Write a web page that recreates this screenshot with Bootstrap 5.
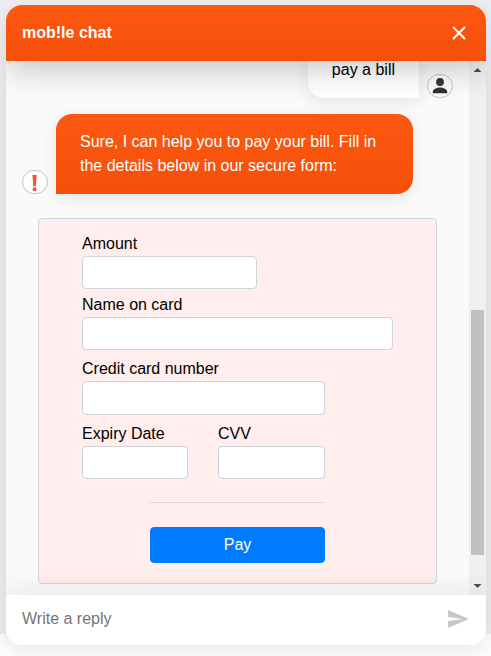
<!DOCTYPE html>
<html lang="en">
<head>
<meta charset="utf-8">
<meta name="viewport" content="width=device-width, initial-scale=1">
<title>mob!le chat</title>
<link href="https://cdn.jsdelivr.net/npm/bootstrap@5.3.0/dist/css/bootstrap.min.css" rel="stylesheet">
<style>
  body { font-family: "Liberation Sans", Arial, sans-serif; height: 656px; padding: 5px 5px 11px 6px; color: #000;
    background: linear-gradient(#eeeef0 0, #ececee 60px, #ececee 634px, #fefcfe 634px); }
  .chat-panel { width: 480px; height: 640px; border-radius: 16px; background: #fafafa; box-shadow: 0 4px 20px rgba(40, 10, 50, .1); }
  .orange { background: linear-gradient(#fc5810, #f4500a); color: #fff; }
  .chat-head { height: 56px; box-shadow: 0 8px 32px rgba(0, 0, 0, .22); z-index: 2; }
  .chat-foot { height: 50px; box-shadow: 0 -6px 24px rgba(30, 10, 50, .07); z-index: 2; padding-bottom: 2px; }
  .chat-foot input { color: #757575; outline: 0; }
  .chat-foot input::placeholder { color: #757575; }
  .messages { padding: 0 32px 11px 16px; }
  .bubble { padding: 16px 24px; line-height: 24px; box-shadow: 0 4px 16px rgba(30, 10, 50, .09); }
  .bubble-user { border-radius: 16px 16px 0 16px; background: #fff; }
  .bubble-bot { width: 357px; border-radius: 16px 16px 16px 0; }
  .avatar { width: 26px; height: 24px; border: 1px solid #c4c4c4; border-radius: 12px; background: #fff; }
  .avatar-user { margin-right: -16px; background: #fafafa; }
  .pay-form { margin-left: 16px; width: 399px; height: 366px; padding: 12px 43px 0; background: #ffeeed; border: 1px solid #ced4da; border-radius: 4px; }
  .pay-form label { line-height: 24px; padding-top: 1px; display: block; }
  .pay-form .form-control { height: 33px; min-height: 0; padding: 4px 8px; border-color: #ced4da; border-radius: 4px; }
  .w-amount { width: 175px; }
  .w-name { width: 311px; }
  .w-card { width: 243px; }
  .pay-form .h-card { height: 34px; }
  .name-row { margin-top: 3px; }
  .gap-row { margin-top: 6px; }
  .w-expiry { width: 106px; }
  .w-cvv { width: 107px; }
  .pay-zone { width: 175px; margin-left: 68px; }
  .divider { height: 1px; margin: 23px 0 24px; background: #e5d6d5; }
  .btn-pay { height: 36px; padding: 0; line-height: 34px; border-radius: 4px; background: #007bff; border-color: #007bff; color: #fff; }
  .scroll-track { width: 17px; background: #f0f0f0; }
  .track-top { height: 249px; }
  .thumb { width: 13px; height: 245px; background: #c1c1c1; }
</style>
</head>
<body>
<main class="chat-panel d-flex flex-column overflow-hidden">
  <header class="chat-head orange d-flex align-items-center justify-content-between px-3 position-relative flex-shrink-0">
    <span class="fw-bold">mob!le chat</span>
    <svg width="22" height="24" viewBox="0 0 22 24" fill="none" stroke="#fff" stroke-width="1.9" aria-label="Close"><path d="M5 6l12 12M17 6L5 18"/></svg>
  </header>
  <div class="d-flex flex-grow-1 overflow-hidden">
    <div class="messages d-flex flex-column justify-content-end flex-grow-1">
      <div class="d-flex justify-content-end align-items-end gap-2 mb-3 flex-shrink-0">
        <div class="bubble bubble-user">pay a bill</div>
        <span class="avatar avatar-user d-flex justify-content-center flex-shrink-0">
          <svg width="24" height="22" viewBox="0 0 24 22" fill="#333"><circle cx="12" cy="7" r="3.9"/><path d="M4.8 18.3v-1.6c0-2.7 4-4.3 7.2-4.3s7.2 1.6 7.2 4.3v1.6z"/></svg>
        </span>
      </div>
      <div class="d-flex align-items-end gap-2 mb-4 flex-shrink-0">
        <span class="avatar d-flex flex-shrink-0">
          <svg width="24" height="22" viewBox="0 0 24 22" fill="#f4582a"><path d="M9.5 4h4.2l-.8 11.2h-2.6z"/><circle cx="11.6" cy="18.2" r="2"/></svg>
        </span>
        <div class="bubble bubble-bot orange">Sure, I can help you to pay your bill. Fill in the details below in our secure form:</div>
      </div>
      <form class="pay-form flex-shrink-0">
        <label for="amount">Amount</label>
        <input id="amount" class="form-control w-amount">
        <div class="name-row">
          <label for="holder">Name on card</label>
          <input id="holder" class="form-control w-name">
        </div>
        <div class="gap-row">
          <label for="number">Credit card number</label>
          <input id="number" class="form-control w-card h-card">
        </div>
        <div class="gap-row w-card d-flex justify-content-between">
          <div class="w-expiry"><label for="expiry">Expiry Date</label><input id="expiry" class="form-control"></div>
          <div class="w-cvv"><label for="cvv">CVV</label><input id="cvv" class="form-control"></div>
        </div>
        <div class="pay-zone">
          <div class="divider"></div>
          <button type="button" class="btn btn-pay w-100">Pay</button>
        </div>
      </form>
    </div>
    <div class="scroll-track d-flex flex-column align-items-center flex-shrink-0">
      <div class="track-top"><svg class="d-block" width="17" height="17" viewBox="0 0 17 17" fill="#505050"><path d="M4.5 11l4-4 4 4z"/></svg></div>
      <div class="thumb"></div>
      <svg class="d-block mt-auto" width="17" height="17" viewBox="0 0 17 17" fill="#505050"><path d="M4.5 6l4 4 4-4z"/></svg>
    </div>
  </div>
  <footer class="chat-foot bg-white d-flex align-items-center px-3 position-relative flex-shrink-0">
    <input class="border-0 bg-transparent p-0 flex-grow-1" placeholder="Write a reply" aria-label="Write a reply">
    <svg width="24" height="24" viewBox="0 0 24 24" fill="#c7c7c7" aria-label="Send"><path d="M2 3l21 9-21 9v-7l15-2-15-2z"/></svg>
  </footer>
</main>
<script src="https://cdn.jsdelivr.net/npm/bootstrap@5.3.0/dist/js/bootstrap.bundle.min.js"></script>
</body>
</html>
